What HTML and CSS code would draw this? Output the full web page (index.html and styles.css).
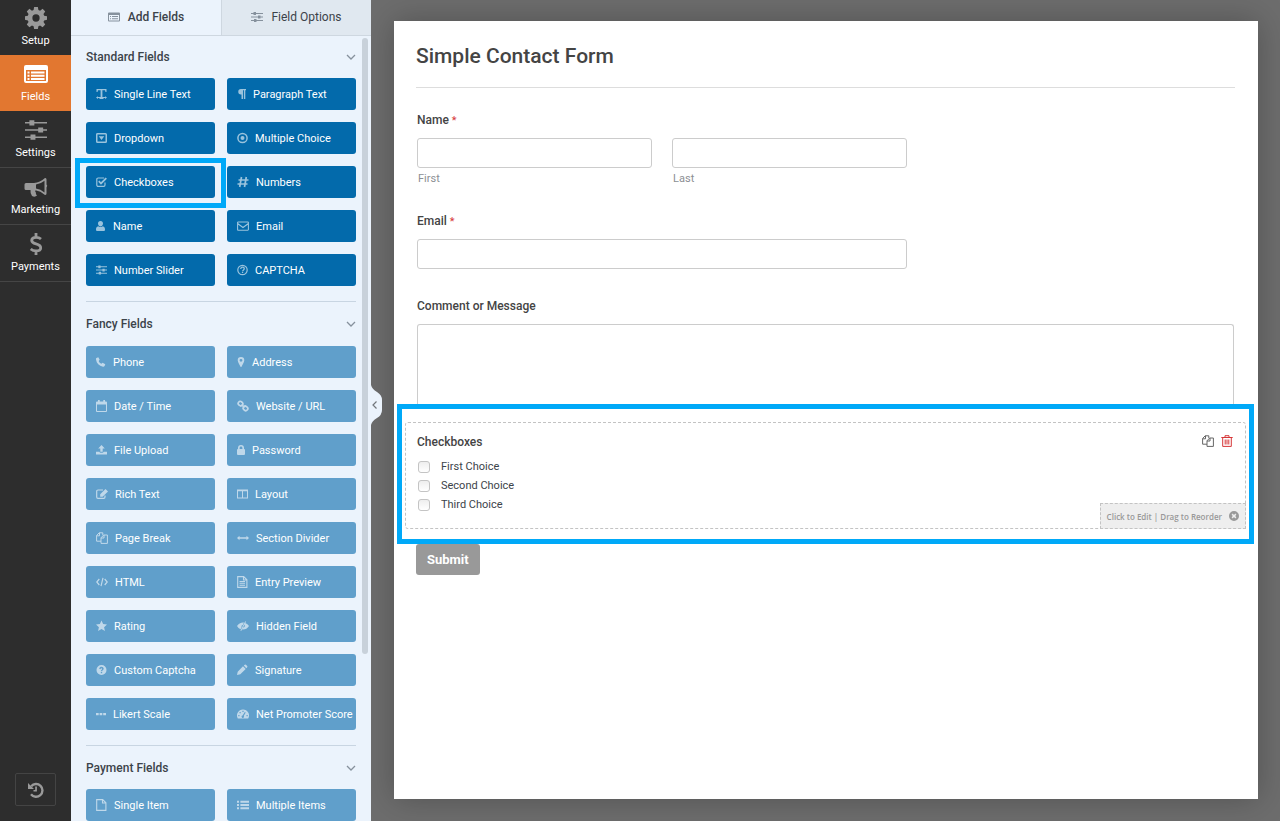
FILE: index.html
```html
<!DOCTYPE html>
<html lang="en">
<head>
<meta charset="utf-8">
<title>Simple Contact Form</title>
<meta name="viewport" content="width=device-width, initial-scale=1">
<link rel="stylesheet" href="styles.css">
</head>
<body>
<svg class="sprite" aria-hidden="true">
  <symbol id="list-alt" viewBox="0 0 12 12"><path fill-rule="evenodd" d="M1 1.500h10a1 1 0 0 1 1 1v7a1 1 0 0 1-1 1H1a1 1 0 0 1-1-1v-7a1 1 0 0 1 1-1zM1 4v5.500h10V4zM2 5h1v1H2zm2 0h6v1H4zM2 7.200h1v1H2zm2 0h6v1H4z"/></symbol>
  <symbol id="sliders" viewBox="0 0 12 12"><path d="M0 2h2.500V1h2.500v1h7v1H5v1H2.500V3H0zM0 5.500h7v-1h2.500v1H12v1H9.500v1H7v-1H0zM0 9h3V8h2.500v1H12v1H5.500v1H3v-1H0z"/></symbol>
  <symbol id="chevron" viewBox="0 0 10 6"><path d="M1 1l4 4 4-4" fill="none" stroke="currentColor" stroke-width="1.300"/></symbol>
  <symbol id="text" viewBox="0 0 11 12"><path d="M.5 1h10v3h-1L9 2.300H6.400v7.200l1.100.3V11h-4V9.800l1.100-.3V2.300H2L1.500 4h-1zM0 9.500l2-1.300v.9h7v-.9l2 1.300-2 1.500v-.9H2v.9z"/></symbol>
  <symbol id="paragraph" viewBox="0 0 9 12"><path d="M4 1h5v1.200H8.300V11H6.900V2.200H6V11H4.500V6.500H4A2.700 2.700 0 0 1 4 1z"/></symbol>
  <symbol id="caret-square" viewBox="0 0 11 12"><path fill-rule="evenodd" d="M1.500 1h8A1.500 1.500 0 0 1 11 2.500v7A1.500 1.500 0 0 1 9.500 11h-8A1.500 1.500 0 0 1 0 9.500v-7A1.500 1.500 0 0 1 1.500 1zm0 1.500v7h8v-7zM2.700 4.300h5.600L5.500 8z"/></symbol>
  <symbol id="radio" viewBox="0 0 11 12"><circle cx="5.500" cy="6" r="4.600" fill="none" stroke="currentColor" stroke-width="1.500"/><circle cx="5.500" cy="6" r="2"/></symbol>
  <symbol id="check-square" viewBox="0 0 11 12"><path d="M9 6.500V9a1.300 1.300 0 0 1-1.300 1.300h-5.500A1.300 1.300 0 0 1 .8 9V3.300A1.300 1.300 0 0 1 2.100 2h6" fill="none" stroke="currentColor" stroke-width="1.200"/><path d="M2.800 5.200l2.200 2.300 5.300-5.300" fill="none" stroke="currentColor" stroke-width="1.800"/></symbol>
  <symbol id="hash" viewBox="0 0 12 12"><path d="M4.500 1L2.700 11M9.300 1L7.500 11M1.500 4h10M.5 8h10" fill="none" stroke="currentColor" stroke-width="1.700"/></symbol>
  <symbol id="user" viewBox="0 0 10 12"><path d="M4.500 1C6.200 1 7 2.200 7 3.600S6 6.500 4.500 6.500 2 5 2 3.600 2.800 1 4.500 1zM2.300 6.200a3.600 3.600 0 0 0 4.400 0C8.600 6.500 9 8 9 9.500 9 10.500 8.500 11 7.500 11h-6C.5 11 0 10.500 0 9.500 0 8 .4 6.500 2.300 6.200z"/></symbol>
  <symbol id="envelope" viewBox="0 0 12 12"><path d="M.6 2.600a.6.600 0 0 1 .6-.6h9.600a.6.600 0 0 1 .6.600v7a.6.600 0 0 1-.6.600H1.200a.6.600 0 0 1-.6-.6zM.6 3.500L6 7.500l5.400-4" fill="none" stroke="currentColor" stroke-width="1.100"/></symbol>
  <symbol id="question-o" viewBox="0 0 11 12"><circle cx="5.500" cy="6" r="4.700" fill="none" stroke="currentColor" stroke-width="1.200"/><path d="M3.800 5c0-1.300.7-1.800 1.700-1.800s1.800.6 1.800 1.500C7.300 5.800 5.600 6 5.600 7.200" fill="none" stroke="currentColor" stroke-width="1.300"/><path d="M4.900 7.800h1.300V9H4.900z"/></symbol>
  <symbol id="phone" viewBox="0 0 10 12"><path d="M.4 2L2.300 1.300l1.400 2.500-1 1.200c.5 1.300 1.400 2.200 2.700 2.800l1.200-1L9.300 8.300 8.600 10c-.4.600-1 .8-1.600.7C3 10 .6 7.500 0 3.600-.1 3 0 2.300.4 2z"/></symbol>
  <symbol id="marker" viewBox="0 0 8 12"><path fill-rule="evenodd" d="M4 1a3.300 3.300 0 0 1 3.300 3.300C7.300 6 5.300 9 4.500 10.700q-.5.600-1 0C2.700 9 .7 6 .7 4.300A3.300 3.300 0 0 1 4 1zm0 1.900a1.400 1.400 0 1 0 0 2.800 1.400 1.400 0 0 0 0-2.800z"/></symbol>
  <symbol id="calendar" viewBox="0 0 11 12"><path fill-rule="evenodd" d="M2 0h1.700v1.500h3.600V0H9v1.500h1a1 1 0 0 1 1 1V11a1 1 0 0 1-1 1H1a1 1 0 0 1-1-1V2.500a1 1 0 0 1 1-1h1zM1 4.500V11h9V4.500z"/></symbol>
  <symbol id="link" viewBox="0 0 12 12"><g fill="none" stroke="currentColor" stroke-width="1.700"><rect x="1.200" y="1.600" width="4.600" height="4" rx="1.800" transform="rotate(40 3.500 3.600)"/><rect x="6.200" y="6.400" width="4.600" height="4" rx="1.800" transform="rotate(40 8.500 8.400)"/><path d="M4.500 4.600l3 2.800"/></g></symbol>
  <symbol id="upload" viewBox="0 0 12 12"><path d="M6 .6l3.600 3.800H7.300V8H4.700V4.400H2.400zM0 8h3.700q.3 1 1.300 1h2q1 0 1.300-1H12v3H0z"/></symbol>
  <symbol id="lock" viewBox="0 0 8 12"><path fill-rule="evenodd" d="M1 5V4a3 3 0 0 1 6 0v1q1 0 1 1v4q0 1-1 1H1q-1 0-1-1V6q0-1 1-1zm1.600 0h2.800V4a1.400 1.400 0 0 0-2.800 0z"/></symbol>
  <symbol id="edit" viewBox="0 0 12 12"><path d="M9 7.500V9a1.300 1.300 0 0 1-1.300 1.300H2A1.300 1.300 0 0 1 .7 9V3.300A1.300 1.300 0 0 1 2 2h5" fill="none" stroke="currentColor" stroke-width="1.200"/><path d="M9.500 1L12 3.400 6.600 8.700H4.200V6.300z"/></symbol>
  <symbol id="columns" viewBox="0 0 11 12"><path fill-rule="evenodd" d="M0 1.500h11v9H0zM1 3.300v6.200h4V3.300zm5 0v6.200h4V3.300z"/></symbol>
  <symbol id="files" viewBox="0 0 12 12"><g fill="none" stroke="currentColor"><path d="M5 9.200H.6V3.500L3.200.8h3.600V3M3.500.8v3H.6M5 11.400V5.800L7.700 3h3.700v8.400zM8 3v3H5"/></g></symbol>
  <symbol id="arrows-h" viewBox="0 0 12 12"><path d="M0 6l2.500-2.300v1.500h7V3.700L12 6 9.500 8.300V6.800h-7v1.500z"/></symbol>
  <symbol id="code" viewBox="0 0 12 12"><path d="M3.300 3L.8 6l2.500 3M8.700 3l2.500 3-2.500 3M7 1.800L5 10.200" fill="none" stroke="currentColor" stroke-width="1.200"/></symbol>
  <symbol id="file-text" viewBox="0 0 11 12"><path d="M.7.600h6l3.200 3.200v7.600H.7zM6.500.6V4h3.400M2.500 5.500H8M2.500 7.300H8M2.500 9.200H8" fill="none" stroke="currentColor" stroke-width="1.100"/></symbol>
  <symbol id="star" viewBox="0 0 11 12"><path d="M5.500.6l1.600 3.500 3.900.5-2.900 2.600.8 3.900-3.400-2-3.400 2 .8-3.900L0 4.600l3.900-.5z"/></symbol>
  <symbol id="eye-slash" viewBox="0 0 12 12"><path d="M0 6q2.300-3.500 6-3.500l1 .1L5.800 5A1.600 1.600 0 0 0 4.600 7.200L3.500 9.200Q1.300 8.200 0 6zM8.300 3q2.400 1 3.700 3-2.300 3.500-6 3.500l-.9-.1 1-1.900A1.700 1.700 0 0 0 7.500 4.700zM3.400 10.700L8.200 1.300l.8.400-4.800 9.400z"/></symbol>
  <symbol id="question" viewBox="0 0 11 12"><path fill-rule="evenodd" d="M5.500 1a5 5 0 1 1 0 10 5 5 0 0 1 0-10zM3.200 4.700l1.300.5c.2-1.200 1.700-1 1.600-.2 0 .8-1.300.8-1.300 2.300h1.400c0-1 1.500-1.200 1.500-2.500 0-2.500-4-2.800-4.500-.1zM4.800 8v1.300h1.400V8z"/></symbol>
  <symbol id="pencil" viewBox="0 0 11 12"><path d="M0 11l.7-3.300L6 2.300l2.700 2.700-5.400 5.300zM6.800 1.600l.9-.8q.6-.5 1.200 0l1.300 1.300q.5.600 0 1.200l-.9.900z"/></symbol>
  <symbol id="dots" viewBox="0 0 10 12"><path d="M0 5h2.700v2.200H0zm3.600 0h2.700v2.200H3.600zm3.600 0H10v2.200H7.200z"/></symbol>
  <symbol id="gauge" viewBox="0 0 12 12"><path fill-rule="evenodd" d="M6 1.500a6 6 0 0 1 5.200 9H.8A6 6 0 0 1 6 1.500zM5.400 2.800V4h1.200V2.800zM2.500 4v1.200h1.200V4zM1.300 7v1.200h1.200V7zm8.200 0v1.200h1.200V7zM7.800 3.900L5.600 7.500a1.200 1.200 0 1 0 1.100.4l2-3.500z"/></symbol>
  <symbol id="file" viewBox="0 0 11 12"><path d="M.7.600h6l3.200 3.200v7.600H.7zM6.500.6V4h3.400" fill="none" stroke="currentColor" stroke-width="1.100"/></symbol>
  <symbol id="list" viewBox="0 0 12 12"><path d="M0 1.800h2v2H0zm3.400 0H12v2H3.400zM0 5h2v2H0zm3.400 0H12v2H3.400zM0 8.200h2v2H0zm3.400 0H12v2H3.400z"/></symbol>
  <symbol id="gear" viewBox="0 0 20 20"><path fill-rule="evenodd" d="M8.300 0h3.400l.5 2.700 1.500.6 2.300-1.600 2.400 2.400-1.600 2.300.6 1.500 2.600.5v3.300l-2.600.5-.6 1.500 1.600 2.300-2.400 2.400-2.300-1.600-1.500.6-.5 2.600H8.300l-.5-2.600-1.500-.6L4 18.400 1.600 16l1.600-2.300-.6-1.500L0 11.700V8.400l2.600-.5.6-1.500-1.600-2.300L4 1.700l2.300 1.600 1.500-.6zM10 6.700a3.300 3.300 0 1 0 0 6.600 3.300 3.300 0 0 0 0-6.600z"/></symbol>
  <symbol id="fields" viewBox="0 0 24 20"><path fill-rule="evenodd" d="M2 1h20a2 2 0 0 1 2 2v14a2 2 0 0 1-2 2H2a2 2 0 0 1-2-2V3a2 2 0 0 1 2-2zm0 5v11h20V6zm1.500 1.500h2v2h-2zm3.500 0h13.500v2H7zm-3.500 3.200h2v2h-2zm3.500 0h13.500v2H7zm-3.500 3.200h2v2h-2zm3.500 0h13.500v2H7z"/></symbol>
  <symbol id="settings" viewBox="0 0 20 20"><path d="M0 2.800h4V1.200h4.500v1.600H20v1.400H8.500v1.600H4V4.200H0zM0 9.300h12V7.700h4.500v1.600H20v1.400h-3.500v1.600H12v-1.600H0zM0 15.800h5v-1.600h4.500v1.600H20v1.400H9.500v1.600H5v-1.600H0z"/></symbol>
  <symbol id="bullhorn" viewBox="0 0 24 20"><path fill-rule="evenodd" d="M2 6h8q6-.5 11-5 1.500-.3 1.500 1.500v5q1.500 1 0 3v6q0 1.500-1.500 1.500-4.500-4-9.500-4.800-.8 1.500.5 2.500-.8 1.300 1 2.800Q11 20.500 8 19q-2-3.500-1.500-6H2q-1.500 0-1.500-1.500v-4Q.5 6 2 6zm18.500-2.200Q16.500 7 12 7.600v4q4.500.7 8.500 4z"/></symbol>
  <symbol id="dollar" viewBox="0 0 14 22"><path d="M12 6Q10 4.300 7 4.300 2.700 4.300 2.700 7.300q0 2.500 4.300 3.600 4.700 1.200 4.700 4t-4.700 3Q4 17.900 1.700 16M7 0v4M7 18v4" fill="none" stroke="currentColor" stroke-width="2.800"/></symbol>
  <symbol id="history" viewBox="0 0 16 16"><path d="M3.200 4.200A6.400 6.400 0 1 1 3 12.300" fill="none" stroke="currentColor" stroke-width="2.400"/><path d="M0 1v6h6zM7.200 4.500h1.700V9.500H5.500V7.900h1.700z"/></symbol>
  <symbol id="trash" viewBox="0 0 12 12"><path d="M.3 2.500h11.400M4 2.200V.7h4v1.500M1.700 2.500v8.900h8.600V2.500M4.200 4.500v5M6 4.500v5M7.800 4.500v5" fill="none" stroke="currentColor"/></symbol>
  <symbol id="times-circle" viewBox="0 0 10 10"><path fill-rule="evenodd" d="M5 0a5 5 0 1 1 0 10A5 5 0 0 1 5 0zM3.700 2.600L2.600 3.700 3.900 5 2.600 6.300l1.100 1.100L5 6.100l1.300 1.300 1.100-1.100L6.100 5l1.300-1.300-1.100-1.100L5 3.900z"/></symbol>
</svg>

<div class="builder">
  <nav class="rail">
    <ul class="rail-list">
      <li><a href="#" class="rail-item"><svg class="rail-icon"><use href="#gear"/></svg>Setup</a></li>
      <li class="current"><a href="#" class="rail-item"><svg class="rail-icon"><use href="#fields"/></svg>Fields</a></li>
      <li><a href="#" class="rail-item"><svg class="rail-icon"><use href="#settings"/></svg>Settings</a></li>
      <li><a href="#" class="rail-item"><svg class="rail-icon"><use href="#bullhorn"/></svg>Marketing</a></li>
      <li><a href="#" class="rail-item"><svg class="rail-icon"><use href="#dollar"/></svg>Payments</a></li>
    </ul>
    <button class="history" aria-label="Revisions"><svg class="history-icon"><use href="#history"/></svg></button>
  </nav>

  <aside class="panel">
    <div class="tabs">
      <button class="tab tab-active"><svg class="i12"><use href="#list-alt"/></svg>Add Fields</button>
      <button class="tab"><svg class="i12"><use href="#sliders"/></svg>Field Options</button>
    </div>
    <div class="groups">
      <section class="group">
        <h2 class="group-title">Standard Fields <svg class="chevron"><use href="#chevron"/></svg></h2>
        <div class="grid">
          <button class="field"><svg class="i11"><use href="#text"/></svg>Single Line Text</button>
          <button class="field"><svg class="i9"><use href="#paragraph"/></svg>Paragraph Text</button>
          <button class="field"><svg class="i11"><use href="#caret-square"/></svg>Dropdown</button>
          <button class="field"><svg class="i11"><use href="#radio"/></svg>Multiple Choice</button>
          <button class="field marked"><svg class="i11"><use href="#check-square"/></svg>Checkboxes</button>
          <button class="field"><svg class="i12"><use href="#hash"/></svg>Numbers</button>
          <button class="field"><svg class="i10"><use href="#user"/></svg>Name</button>
          <button class="field"><svg class="i12"><use href="#envelope"/></svg>Email</button>
          <button class="field"><svg class="i11"><use href="#sliders"/></svg>Number Slider</button>
          <button class="field"><svg class="i11"><use href="#question-o"/></svg>CAPTCHA</button>
        </div>
      </section>
      <section class="group pro">
        <h2 class="group-title">Fancy Fields <svg class="chevron"><use href="#chevron"/></svg></h2>
        <div class="grid">
          <button class="field"><svg class="i10"><use href="#phone"/></svg>Phone</button>
          <button class="field"><svg class="i8"><use href="#marker"/></svg>Address</button>
          <button class="field"><svg class="i11"><use href="#calendar"/></svg>Date / Time</button>
          <button class="field"><svg class="i12"><use href="#link"/></svg>Website / URL</button>
          <button class="field"><svg class="i11"><use href="#upload"/></svg>File Upload</button>
          <button class="field"><svg class="i8"><use href="#lock"/></svg>Password</button>
          <button class="field"><svg class="i12"><use href="#edit"/></svg>Rich Text</button>
          <button class="field"><svg class="i11"><use href="#columns"/></svg>Layout</button>
          <button class="field"><svg class="i12"><use href="#files"/></svg>Page Break</button>
          <button class="field"><svg class="i12"><use href="#arrows-h"/></svg>Section Divider</button>
          <button class="field"><svg class="i12"><use href="#code"/></svg>HTML</button>
          <button class="field"><svg class="i11"><use href="#file-text"/></svg>Entry Preview</button>
          <button class="field"><svg class="i11"><use href="#star"/></svg>Rating</button>
          <button class="field"><svg class="i12"><use href="#eye-slash"/></svg>Hidden Field</button>
          <button class="field"><svg class="i11"><use href="#question"/></svg>Custom Captcha</button>
          <button class="field"><svg class="i11"><use href="#pencil"/></svg>Signature</button>
          <button class="field"><svg class="i10"><use href="#dots"/></svg>Likert Scale</button>
          <button class="field"><svg class="i12"><use href="#gauge"/></svg>Net Promoter Score</button>
        </div>
      </section>
      <section class="group pro">
        <h2 class="group-title">Payment Fields <svg class="chevron"><use href="#chevron"/></svg></h2>
        <div class="grid">
          <button class="field"><svg class="i11"><use href="#file"/></svg>Single Item</button>
          <button class="field"><svg class="i12"><use href="#list"/></svg>Multiple Items</button>
        </div>
      </section>
    </div>
    <div class="scroll-thumb"></div>
    <button class="collapse" aria-label="Collapse panel">
      <svg class="collapse-shape" viewBox="0 0 12 40"><path d="M0 0q1 4 6 7 5 3 5 8v10q0 5-5 8-5 3-6 7z" fill="#ebf3fc"/><path d="M5.500 16.500L2 20l3.500 3.500" fill="none" stroke="#72777c" stroke-width="1.200"/></svg>
    </button>
  </aside>

  <main class="stage">
    <form class="card">
      <h1 class="form-title">Simple Contact Form</h1>
      <div class="form-body">
        <fieldset class="block name-block">
          <legend class="label">Name <span class="required">*</span></legend>
          <div class="name-row">
            <div class="name-part"><input type="text" class="input" id="first"><label class="sublabel" for="first">First</label></div>
            <div class="name-part"><input type="text" class="input" id="last"><label class="sublabel" for="last">Last</label></div>
          </div>
        </fieldset>
        <div class="block">
          <label class="label" for="email">Email <span class="required">*</span></label>
          <input type="email" class="input medium" id="email">
        </div>
        <div>
          <label class="label" for="message">Comment or Message</label>
          <textarea class="textarea" id="message"></textarea>
        </div>
        <div class="highlight">
          <fieldset class="selected">
            <legend class="label choices-label">Checkboxes</legend>
            <label class="choice"><input type="checkbox" class="check">First Choice</label>
            <label class="choice"><input type="checkbox" class="check">Second Choice</label>
            <label class="choice"><input type="checkbox" class="check">Third Choice</label>
            <div class="actions">
              <button type="button" class="action" aria-label="Duplicate"><svg class="action-icon"><use href="#files"/></svg></button>
              <button type="button" class="action delete" aria-label="Delete"><svg class="action-icon"><use href="#trash"/></svg></button>
            </div>
            <div class="helper">Click to Edit | Drag to Reorder <button type="button" class="action" aria-label="Dismiss"><svg class="dismiss-icon"><use href="#times-circle"/></svg></button></div>
          </fieldset>
        </div>
      </div>
      <button type="button" class="submit">Submit</button>
    </form>
  </main>
</div>
</body>
</html>
```

FILE: styles.css
```css
* { box-sizing: border-box; }
body {
  margin: 0;
  font-family: Roboto, "Noto Sans", sans-serif;
  font-size: 11px;
  color: #3c434a;
}
button { font: inherit; border: 0; padding: 0; cursor: pointer; }
svg { fill: currentColor; flex: none; display: block; }
fieldset { border: 0; margin: 0; padding: 0; min-width: 0; }
.sprite { position: absolute; width: 0; height: 0; }
.builder { display: flex; height: 100vh; overflow: hidden; background: #6d6d6d; }

/* Left navigation */
.rail {
  width: 71px;
  flex: none;
  display: flex;
  flex-direction: column;
  justify-content: space-between;
  align-items: center;
  padding-bottom: 15px;
  background: #2d2d2d;
}
.rail-list { list-style: none; margin: 0; padding: 0; width: 100%; }
.rail-list li { border-bottom: 1px solid #454545; }
.rail-list li:first-child, .rail-list .current { border-bottom: 0; }
.rail-list li:first-child .rail-item { height: 55px; padding-top: 6px; }
.rail-item {
  height: 56px;
  padding-top: 7px;
  display: flex;
  flex-direction: column;
  align-items: center;
  gap: 3px;
  line-height: 16px;
  color: #fff;
  text-decoration: none;
}
.rail-icon { width: 24px; height: 24px; padding: 1px 0; color: #999; }
.current { background: #e27730; }
.current .rail-icon { color: #fff; }
.history {
  width: 41px;
  height: 33px;
  display: grid;
  place-items: center;
  background: transparent;
  border: 1px solid #444;
  border-radius: 2px;
  color: #999;
}
.history-icon { width: 16px; height: 16px; }

/* Field picker */
.panel {
  width: 300px;
  flex: none;
  position: relative;
  z-index: 1;
  display: flex;
  flex-direction: column;
  background: #ebf3fc;
}
.tabs { display: grid; grid-template-columns: 1fr 1fr; flex: none; }
.tab {
  height: 36px;
  padding-bottom: 2px;
  display: flex;
  align-items: center;
  justify-content: center;
  gap: 8px;
  font-size: 12px;
  color: #3c434a;
  background: #e0e8f0;
  border-bottom: 1px solid #ced7e0;
  border-left: 1px solid #ced7e0;
}
.tab svg { color: #86919d; }
.tab-active { background: #ebf3fc; border-left: 0; font-weight: 500; }
.groups { flex: 1; overflow: hidden; padding: 0 15px; }
.group { padding-bottom: 15px; border-bottom: 1px solid #c8d5e2; }
.group-title {
  margin: 0;
  height: 44px;
  display: flex;
  align-items: center;
  justify-content: space-between;
  font-size: 12px;
  font-weight: 500;
}
.group:first-child .group-title { height: 42px; }
.group:last-child .group-title { height: 43px; }
.chevron { width: 10px; height: 6px; color: #86919d; }
.grid { display: grid; grid-template-columns: repeat(2, minmax(0, 1fr)); gap: 12px; }
.field {
  position: relative;
  height: 32px;
  padding-left: 10px;
  display: flex;
  align-items: center;
  gap: 7px;
  border-radius: 3px;
  background: #036aab;
  color: #fff;
  white-space: nowrap;
}
.field svg { opacity: .6; }
.pro .field { background: #609fcb; }
.marked::after {
  content: "";
  position: absolute;
  inset: -8px -11px -10px;
  border: 5px solid #00a9f8;
}
.i8, .i9, .i10, .i11, .i12 { height: 12px; }
.i8 { width: 8px; }
.i9 { width: 9px; }
.i10 { width: 10px; }
.i11 { width: 11px; }
.i12 { width: 12px; }
.scroll-thumb {
  position: absolute;
  top: 38px;
  right: 3px;
  width: 6px;
  height: 75%;
  border-radius: 3px;
  background: #c8d1da;
}
.collapse { position: absolute; top: 385px; left: 100%; background: none; }
.collapse-shape { width: 12px; height: 40px; }

/* Form preview */
.stage { flex: 1; min-width: 0; display: flex; padding: 21px 22px 22px 23px; }
.card {
  flex: 1;
  min-width: 0;
  padding: 0 23px 0 22px;
  background: #fff;
  box-shadow: 0 0 30px rgba(0, 0, 0, .25);
}
.form-title {
  margin: 0;
  height: 67px;
  line-height: 70px;
  font-size: 21px;
  font-weight: 500;
  color: #444;
  border-bottom: 1px solid #ddd;
}
.form-body { padding: 22px 1px 0; }
.block { margin-bottom: 27px; }
.name-block { margin-bottom: 21px; }
.label {
  display: block;
  padding: 0;
  margin-bottom: 8px;
  line-height: 20px;
  font-size: 12px;
  font-weight: 500;
  color: #444;
}
.required { color: #d63638; font-size: 11px; font-weight: 400; line-height: 1; }
.input, .textarea {
  display: block;
  width: 100%;
  height: 30px;
  padding: 0 8px;
  font: inherit;
  background: #fff;
  border: 1px solid #ccc;
  border-radius: 3px;
}
.medium, .name-row { width: 60%; }
.name-row { display: grid; grid-template-columns: 1fr 1fr; gap: 20px; }
.sublabel { display: block; padding-left: 1px; line-height: 22px; color: #8c8f94; }
.textarea { height: 80px; resize: none; border-bottom: 0; border-radius: 3px 3px 0 0; }
.highlight { margin: 0 -20px; padding: 13px 3px 10px; border: 5px solid #00a9f8; }
.selected {
  position: relative;
  padding: 9px 12px 14px 11px;
  border: 1px dashed #c3c3c3;
  border-radius: 3px;
}
.choices-label { float: left; width: 100%; margin-bottom: 5px; }
.choice { clear: both; display: flex; align-items: center; gap: 11px; height: 19px; }
.check {
  appearance: none;
  width: 12px;
  height: 12px;
  margin: 0 0 0 1px;
  border: 1px solid #c4c4c4;
  border-radius: 3px;
  background: linear-gradient(#eee, #fff);
}
.actions { position: absolute; top: 12px; right: 12px; display: flex; gap: 7px; }
.action { background: none; color: #666; }
.action-icon { width: 12px; height: 12px; }
.delete { color: #d63638; }
.helper {
  position: absolute;
  right: -1px;
  bottom: -1px;
  height: 26px;
  padding: 0 6px;
  display: flex;
  align-items: center;
  gap: 7px;
  font-family: "Open Sans", "Noto Sans", sans-serif;
  font-size: 8px;
  font-weight: 600;
  color: #999;
  background: #eee;
  border: 1px dashed #c3c3c3;
}
.helper .action { color: #999; }
.dismiss-icon { width: 10px; height: 10px; }
.submit {
  height: 31px;
  padding: 0 11px;
  font-size: 13px;
  font-weight: 700;
  color: #fff;
  background: #999;
  border-radius: 3px;
}
```
